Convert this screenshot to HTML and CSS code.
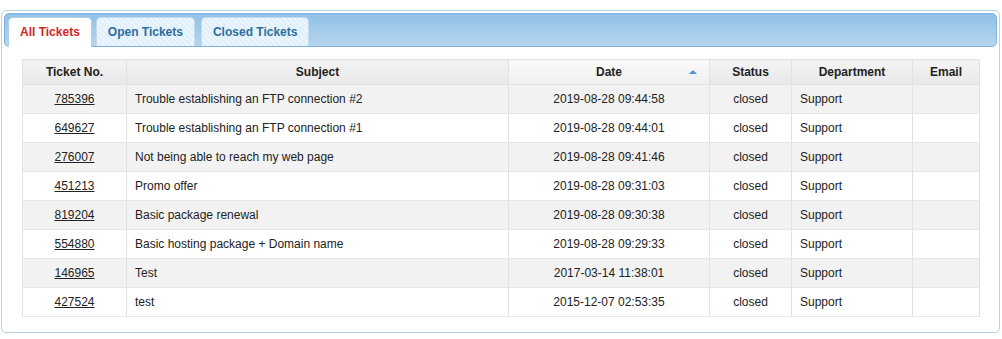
FILE: index.html
```html
<!DOCTYPE html>
<html lang="en">
<head>
    <meta charset="UTF-8">
    <meta name="viewport" content="width=device-width, initial-scale=1.0">
    <title>Tickets</title>
    <link rel="stylesheet" href="styles.css">
</head>
<body>
    <div class="tabs">
        <ul class="tab-nav">
            <li class="tab active"><a href="#all">All Tickets</a></li>
            <li class="tab"><a href="#open">Open Tickets</a></li>
            <li class="tab"><a href="#closed">Closed Tickets</a></li>
        </ul>
        <div class="panel" id="all">
            <table class="tickets">
                <thead>
                    <tr>
                        <th class="c-id">Ticket No.</th>
                        <th class="c-subject">Subject</th>
                        <th class="c-date sorted">Date <span class="sort-arrow"></span></th>
                        <th class="c-status">Status</th>
                        <th class="c-dept">Department</th>
                        <th class="c-email">Email</th>
                    </tr>
                </thead>
                <tbody>
                    <tr><td class="center"><a href="#">785396</a></td><td>Trouble establishing an FTP connection #2</td><td class="center">2019-08-28 09:44:58</td><td class="center">closed</td><td>Support</td><td></td></tr>
                    <tr><td class="center"><a href="#">649627</a></td><td>Trouble establishing an FTP connection #1</td><td class="center">2019-08-28 09:44:01</td><td class="center">closed</td><td>Support</td><td></td></tr>
                    <tr><td class="center"><a href="#">276007</a></td><td>Not being able to reach my web page</td><td class="center">2019-08-28 09:41:46</td><td class="center">closed</td><td>Support</td><td></td></tr>
                    <tr><td class="center"><a href="#">451213</a></td><td>Promo offer</td><td class="center">2019-08-28 09:31:03</td><td class="center">closed</td><td>Support</td><td></td></tr>
                    <tr><td class="center"><a href="#">819204</a></td><td>Basic package renewal</td><td class="center">2019-08-28 09:30:38</td><td class="center">closed</td><td>Support</td><td></td></tr>
                    <tr><td class="center"><a href="#">554880</a></td><td>Basic hosting package + Domain name</td><td class="center">2019-08-28 09:29:33</td><td class="center">closed</td><td>Support</td><td></td></tr>
                    <tr><td class="center"><a href="#">146965</a></td><td>Test</td><td class="center">2017-03-14 11:38:01</td><td class="center">closed</td><td>Support</td><td></td></tr>
                    <tr><td class="center"><a href="#">427524</a></td><td>test</td><td class="center">2015-12-07 02:53:35</td><td class="center">closed</td><td>Support</td><td></td></tr>
                </tbody>
            </table>
        </div>
    </div>
</body>
</html>
```

FILE: styles.css
```css
body {
    margin: 0;
    padding: 10px 2px 0 1px;
    font-family: "Liberation Sans", Arial, sans-serif;
    font-size: 12px;
    color: #222;
    background-color: #fff;
}
.tabs {
    border: 1px solid #b6d2e9;
    border-radius: 5px;
    padding: 2px;
    height: 323px;
    box-sizing: border-box;
}
.tab-nav {
    list-style: none;
    margin: 0;
    padding: 3px 3px 0 3px;
    height: 29px;
    display: flex;
    gap: 4px;
    border: 1px solid #7eb1dc;
    border-radius: 5px;
    background: linear-gradient(#8fc1e7, #b6d5ee);
}
.tab {
    height: 28px;
    border: 1px solid #c5dbec;
    border-bottom: none;
    border-radius: 5px 5px 0 0;
    background-color: #dfeffc;
    background-image: repeating-linear-gradient(45deg, rgba(255,255,255,0.35) 0 2px, rgba(255,255,255,0) 2px 4px);
}
.tab a {
    display: block;
    padding: 0 11px;
    line-height: 28px;
    font-weight: bold;
    color: #2e6e9e;
    text-decoration: none;
}
.tab.active {
    height: 29px;
    background: #fff;
    border-color: #aed0ea;
    position: relative;
    z-index: 1;
}
.tab.active a {
    color: #d2261f;
}
.tab:nth-child(2) {
    margin-right: 2px;
}
.panel {
    padding: 12px 17px 0 18px;
}
.tickets {
    width: 958px;
    border-collapse: collapse;
    border: 1px solid #e2e2e2;
    table-layout: fixed;
}
.tickets th {
    box-sizing: border-box;
    height: 25px;
    padding: 0 8px;
    font-weight: bold;
    text-align: center;
    background: linear-gradient(#f4f4f4, #e8e8e8);
    border: 1px solid #e2e2e2;
    position: relative;
}
.tickets th.sorted {
    background: linear-gradient(#fafafa, #efefef);
}
.sort-arrow {
    position: absolute;
    right: 12px;
    top: 10px;
    width: 0;
    height: 0;
    border-left: 4px solid transparent;
    border-right: 4px solid transparent;
    border-bottom: 4px solid #4a96d2;
}
.c-id { width: 104px; }
.c-subject { width: 382px; }
.c-date { width: 201px; }
.c-status { width: 82px; }
.c-dept { width: 121px; }
.c-email { width: 67px; }
.tickets td {
    height: 28px;
    padding: 0 8px;
    border-left: 1px solid #e2e2e2;
    border-right: 1px solid #e2e2e2;
    border-bottom: 1px solid #e6e6e6;
    white-space: nowrap;
}
.tickets tbody tr:nth-child(odd) td {
    background-color: #f2f2f2;
}
.tickets td.center {
    text-align: center;
}
.tickets td a {
    color: #222;
    text-decoration: underline;
}
```
